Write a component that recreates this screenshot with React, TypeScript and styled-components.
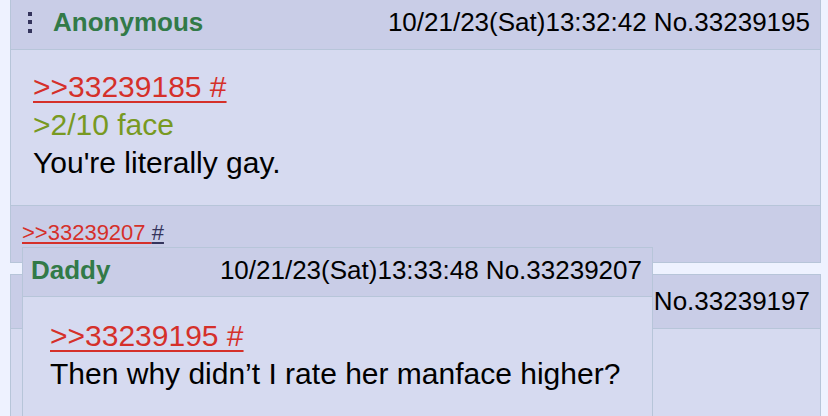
import React from "react";
import styled, { createGlobalStyle } from "styled-components";

const GlobalStyle = createGlobalStyle`
  html, body {
    margin: 0;
    padding: 0;
    background-color: #eef2ff;
    font-family: "Liberation Sans", Arial, sans-serif;
    overflow: hidden;
  }
`;

const Dots = () => (
  <svg width="4" height="21" viewBox="0 0 4 21">
    <rect x="0" y="0" width="4" height="4" fill="#34345c" />
    <rect x="0" y="8" width="4" height="4" fill="#34345c" />
    <rect x="0" y="17" width="4" height="4" fill="#34345c" />
  </svg>
);

const App = () => {
  return (
    <Screen>
      <GlobalStyle />
      <Thread>
        <Post>
          <PostHeader>
            <NameBlock>
              <Dots />
              <Name>Anonymous</Name>
            </NameBlock>
            <DateNo>10/21/23(Sat)13:32:42 No.33239195</DateNo>
          </PostHeader>
          <PostBody>
            <Line>
              <Link>&gt;&gt;33239185 #</Link>
            </Line>
            <Line $green>&gt;2/10 face</Line>
            <Line>You're literally gay.</Line>
          </PostBody>
          <Backlinks>
            <Link>&gt;&gt;33239207 </Link>
            <Link $navy>#</Link>
          </Backlinks>
        </Post>
        <Post>
          <PostHeader>
            <NameBlock>
              <Dots />
              <Name>Anonymous</Name>
            </NameBlock>
            <DateNo>10/21/23(Sat)13:33:05 No.33239197</DateNo>
          </PostHeader>
          <PostBody>
            <Line>
              <Link>&gt;&gt;33239185 #</Link>
            </Line>
            <Line>&nbsp;</Line>
          </PostBody>
        </Post>
      </Thread>
      <Preview>
        <PreviewHeader>
          <Name>Daddy</Name>
          <DateNo>10/21/23(Sat)13:33:48 No.33239207</DateNo>
        </PreviewHeader>
        <PreviewBody>
          <Line>
            <Link>&gt;&gt;33239195 #</Link>
          </Line>
          <Line>Then why didn’t I rate her manface higher?</Line>
          <Line>&nbsp;</Line>
        </PreviewBody>
      </Preview>
    </Screen>
  );
};

export default App;

const Screen = styled.div`
  position: relative;
  width: 828px;
  height: 416px;
  overflow: hidden;
`;

const Thread = styled.div`
  display: flex;
  flex-direction: column;
  gap: 11px;
  margin-top: -5px;
  padding: 0 7px 0 10px;
`;

const Post = styled.div`
  background-color: #d6daf0;
  border: 1px solid #b7c5d9;
`;

const PostHeader = styled.div`
  display: flex;
  align-items: center;
  justify-content: space-between;
  height: 53px;
  padding: 0 10px 0 17px;
  background-color: #c9cde7;
  border-bottom: 1px solid #b7c5d9;
  font-size: 26px;
  white-space: nowrap;
`;

const NameBlock = styled.div`
  display: flex;
  align-items: center;
  gap: 21px;
`;

const Name = styled.span`
  color: #327a48;
  font-weight: bold;
`;

const DateNo = styled.span`
  color: #000;
`;

const PostBody = styled.div`
  padding: 18px 22px 23px;
  font-size: 30px;
  line-height: 38px;
  color: #000;
`;

const Line = styled.div<{ $green?: boolean }>`
  color: ${(p) => (p.$green ? "#789922" : "#000")};
  white-space: nowrap;
`;

const Link = styled.span<{ $navy?: boolean }>`
  color: ${(p) => (p.$navy ? "#34345c" : "#d5302a")};
  text-decoration: underline;
  text-decoration-thickness: 2px;
  text-underline-offset: 4px;
  white-space: pre;
`;

const Backlinks = styled.div`
  height: 57px;
  box-sizing: border-box;
  padding: 14px 11px 0;
  background-color: #c9cde7;
  border-top: 1px solid #b7c5d9;
  font-size: 22px;

  ${Link} {
    text-decoration-thickness: 2px;
    text-underline-offset: 2px;
  }
`;

const Preview = styled.div`
  position: absolute;
  left: 22px;
  top: 247px;
  width: 631px;
  box-sizing: border-box;
  background-color: #d6daf0;
  border: 1px solid #b7c5d9;
`;

const PreviewHeader = styled.div`
  display: flex;
  justify-content: space-between;
  height: 49px;
  box-sizing: border-box;
  padding: 7px 10px 0 8px;
  line-height: 30px;
  background-color: #c9cde7;
  border-bottom: 1px solid #b7c5d9;
  font-size: 26px;
  white-space: nowrap;
`;

const PreviewBody = styled.div`
  padding: 20px 27px 23px;
  font-size: 30px;
  line-height: 38px;
`;
